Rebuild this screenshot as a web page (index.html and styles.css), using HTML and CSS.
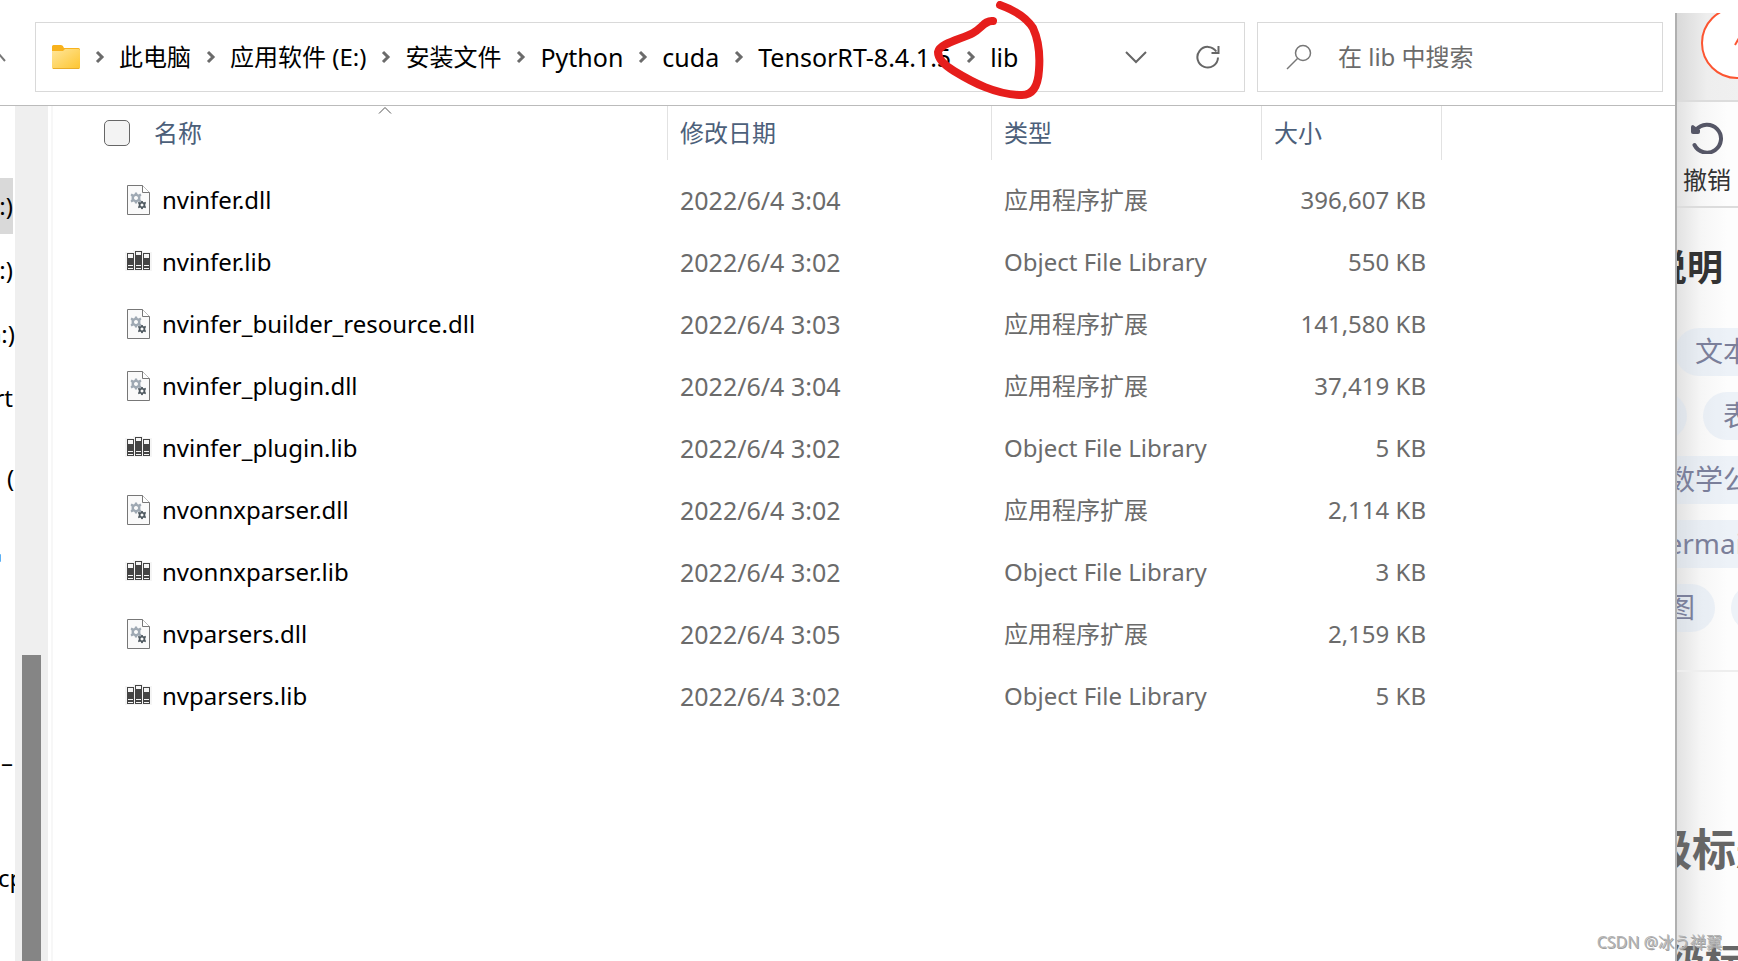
FILE: index.html
```html
<!DOCTYPE html>
<html lang="zh-CN">
<head>
<meta charset="utf-8">
<title>lib</title>
<link rel="stylesheet" href="styles.css">
<script src="files.js" defer></script>
</head>
<body>
<svg class="defs" aria-hidden="true">
  <symbol id="chev" viewBox="0 0 10 14"><path d="M2 2l5 5-5 5" fill="none" stroke="#6b6b6b" stroke-width="3"/></symbol>
  <symbol id="gear" viewBox="-6 -6 12 12"><path fill-rule="evenodd" d="M-1-5.5h2l.4 1.6 1.2.5 1.8-1 1.1 1.6-1.1 1.4v2.8l1.1 1.4-1.1 1.6-1.8-1-1.2.5-.4 1.6h-2l-.4-1.6-1.2-.5-1.8 1-1.1-1.6 1.1-1.4v-2.8l-1.1-1.4 1.1-1.6 1.8 1 1.2-.5zM0-2a2 2 0 1 0 .01 0z"/></symbol>
  <symbol id="dll" viewBox="0 0 27 30"><path d="M2.500.500h15l7 7v22h-22z" fill="#fafafa" stroke="#777"/><path d="M17.500.500v7h7" fill="#fff" stroke="#777"/><use href="#gear" x="5" y="7" width="12" height="12" fill="#9fa9b3"/><use href="#gear" x="12.500" y="15.500" width="9" height="9" fill="#4f5960"/></symbol>
  <symbol id="lib" viewBox="0 0 27 30"><path d="M0 5h8V3h10v2h9v19H0z" fill="#f5f5f5"/><path d="M2 6h7v17H2zM10 4h7v19h-7zM18 6h7v17h-7z" fill="#444"/><path d="M3 7h5v4H3zM11 5h5v3h-5zM19 7h5v4h-5zM3 18h5v1H3zM3 21h5v1H3zM11 18h5v1h-5zM11 21h5v1h-5zM19 18h5v1h-5zM19 21h5v1h-5z" fill="#f5f5f5"/></symbol>
</svg>
<div class="desktop">
  <main class="window">
    <div class="topbar">
      <button class="up" aria-label="上移"><svg viewBox="0 0 14 10" width="14" height="10"><path d="M1 9l6-7 6 7" fill="none" stroke="#777" stroke-width="2"/></svg></button>
      <nav class="address" aria-label="路径">
        <svg class="folder" viewBox="0 0 28 24" width="28" height="24"><defs><linearGradient id="fg" x1="0" y1="0" x2="1" y2="1"><stop offset="0" stop-color="#ffe69b"/><stop offset="1" stop-color="#fdc52f"/></linearGradient></defs><path d="M0 1.500Q0 0 1.500 0H9q2 0 3 3h14.500Q28 3 28 4.500V12H0z" fill="#f8b21c"/><path d="M0 6h11l2-2h13.500Q28 4 28 5.500v17q0 1.500-1.500 1.500h-25Q0 24 0 22.500z" fill="url(#fg)"/><path d="M1 23.500h26" stroke="#e8ac2b"/></svg>
        <ol class="crumbs">
          <li><a href="#">此电脑</a></li>
          <li><a href="#">应用软件 (E:)</a></li>
          <li><a href="#">安装文件</a></li>
          <li class="latin"><a href="#">Python</a></li>
          <li class="latin"><a href="#">cuda</a></li>
          <li class="latin"><a href="#">TensorRT-8.4.1.5</a></li>
          <li class="latin"><a href="#">lib</a></li>
        </ol>
        <button aria-label="历史记录"><svg viewBox="0 0 24 24" width="24" height="24"><path d="M2 7l10 10L22 7" fill="none" stroke="#666" stroke-width="2"/></svg></button>
        <button aria-label="刷新"><svg viewBox="0 0 24 24" width="24" height="24"><path d="M22 12.500A10.300 10.300 0 1 1 20.300 6.500M22.500 1v7h-7" fill="none" stroke="#666" stroke-width="2"/></svg></button>
        <svg class="scribble" viewBox="0 0 112 104" width="112" height="104" aria-hidden="true"><path d="M66 4C80 9 92 16 99 27C105 40 106 56 105 69C104 86 98 94 88 94C62 94 38 81 20 70C10 64 4 57 4 51C6 42 28 38 39 32C48 27 51 19 59 20" fill="none" stroke="#e61e1c" stroke-width="8" stroke-linecap="round" stroke-linejoin="round"/></svg>
      </nav>
      <label class="search">
        <svg viewBox="0 0 26 26" width="26" height="26"><circle cx="17" cy="9" r="7.500" fill="none" stroke="#777" stroke-width="1.500"/><path d="M11.500 14.500L1 25" stroke="#777" stroke-width="1.500"/></svg>
        <input type="text" placeholder="在 lib 中搜索" aria-label="在 lib 中搜索">
      </label>
    </div>
    <div class="body">
      <aside class="tree">
        <span class="node selected">:)</span>
        <span class="node">:)</span>
        <span class="node cut">G:)</span>
        <span class="node">rt</span>
        <span class="node paren">(</span>
        <span class="node dot"></span>
        <span class="node dash">–</span>
        <span class="node cut-cp">cp</span>
      </aside>
      <div class="scrollbar"><div class="thumb"></div></div>
      <section class="files">
        <table>
          <colgroup><col><col class="c-date"><col class="c-type"><col class="c-size"><col class="c-rest"></colgroup>
          <thead><tr>
            <th><svg class="sort" viewBox="0 0 14 8" width="14" height="8"><path d="M1 7.500l6-6 6 6" fill="none" stroke="#555"/></svg><label class="all"><input type="checkbox" aria-label="全选">名称</label></th>
            <th>修改日期</th><th>类型</th><th>大小</th><th></th>
          </tr></thead>
          <tbody id="rows"></tbody>
        </table>
      </section>
    </div>
  </main>
  <aside class="editor">
    <div class="publish"><span class="round"><svg viewBox="0 0 72 72" width="72" height="72"><circle cx="36" cy="36" r="35" fill="#fff" stroke="#fc5531" stroke-width="2"/><path d="M34 38l4-7" stroke="#fc5531" stroke-width="2"/></svg></span></div>
    <button class="undo"><svg viewBox="0 0 32 32" width="32" height="32"><path d="M5 8A14 14 0 1 1 3.500 23" fill="none" stroke="#555666" stroke-width="4" stroke-linecap="round"/><path d="M0 5q0-2 2-2l7 5v2q0 2-2 2H2q-2 0-2-2z" fill="#555666"/></svg>撤销</button>
    <div class="help">
      <h2>说明</h2>
      <div class="pills p1"><span>文本样式</span></div>
      <div class="pills p2"><span>列表</span><span>表格</span></div>
      <div class="pills p3"><span>数学公式</span></div>
      <div class="pills p4"><span>Mermaid</span></div>
      <div class="pills p5"><span>图</span><span>图</span></div>
    </div>
    <div class="levels"><strong class="h1">级标题</strong><strong class="h2">级标题</strong></div>
  </aside>
  <div class="watermark">CSDN @冰う禅翼</div>
</div>
</body>
</html>
```
FILE: files.js
```js
const files = [
  ["nvinfer.dll", "2022/6/4 3:04", "396,607 KB"],
  ["nvinfer.lib", "2022/6/4 3:02", "550 KB"],
  ["nvinfer_builder_resource.dll", "2022/6/4 3:03", "141,580 KB"],
  ["nvinfer_plugin.dll", "2022/6/4 3:04", "37,419 KB"],
  ["nvinfer_plugin.lib", "2022/6/4 3:02", "5 KB"],
  ["nvonnxparser.dll", "2022/6/4 3:02", "2,114 KB"],
  ["nvonnxparser.lib", "2022/6/4 3:02", "3 KB"],
  ["nvparsers.dll", "2022/6/4 3:05", "2,159 KB"],
  ["nvparsers.lib", "2022/6/4 3:02", "5 KB"]
];
document.getElementById("rows").innerHTML = files.map(([name, date, size]) => {
  const kind = name.slice(-3);
  const type = kind === "dll" ? "应用程序扩展" : "Object File Library";
  return `<tr><td><span class="name"><svg width="27" height="30"><use href="#${kind}"/></svg>${name}</span></td>` +
    `<td class="latin">${date}</td><td>${type}</td><td class="size">${size}</td><td></td></tr>`;
}).join("");
document.querySelectorAll(".crumbs li").forEach(li => {
  li.insertAdjacentHTML("afterbegin", '<svg width="10" height="14"><use href="#chev"/></svg>');
});
```
FILE: styles.css
```css
* { box-sizing: border-box; }
body { margin: 0; background: #fff; color: #000; font: 24px/32px "Noto Sans", "Noto Sans CJK SC", sans-serif; }
button { border: 0; background: none; padding: 0; font: inherit; color: inherit; }
.defs { position: absolute; width: 0; height: 0; }
.desktop { position: relative; display: flex; height: 100vh; overflow: hidden; }
.window { flex: 1; min-width: 0; display: flex; flex-direction: column; }
.topbar { display: flex; height: 106px; padding: 22px 12px 13px 0; border-bottom: 1px solid #bbb; }
.up { width: 35px; display: flex; align-items: center; overflow: hidden; }
.up svg { flex: none; margin-left: -8px; }
.address { position: relative; flex: 1; display: flex; align-items: center; border: 1px solid #d9d9d9; padding: 0 24px 0 16px; }
.crumbs { flex: 1; display: flex; margin: 0; padding: 0; list-style: none; white-space: nowrap; }
.crumbs li { display: flex; align-items: center; }
.crumbs svg { margin: 0 14px 0 15px; }
.crumbs a { color: #000; text-decoration: none; }
.address button { width: 24px; height: 24px; margin-left: 48px; }
.address button svg { display: block; }
.scribble { position: absolute; left: 898px; top: -22px; }
.search { flex: 0 0 406px; min-width: 0; display: flex; align-items: center; gap: 26px; margin-left: 12px; padding: 0 28px; border: 1px solid #d9d9d9; }
.search svg { flex: none; }
.search input { width: 0; min-width: 0; flex: 1; border: 0; outline: 0; padding: 0; font: inherit; background: none; }
.search input::placeholder { color: #6b6b6b; opacity: 1; }
.body { flex: 1; display: flex; min-height: 0; }
.tree { width: 15px; padding: 72px 2px 0 0; display: flex; flex-direction: column; overflow: hidden; }
.node { flex: none; display: flex; justify-content: flex-end; align-items: center; height: 56px; margin-bottom: 8px; }
.selected { background: #d9d9d9; }
.cut { margin-right: -2px; }
.paren { margin-top: 16px; justify-content: flex-start; padding-left: 7px; }
.dot { margin-top: 16px; }
.dot::before { content: ""; width: 2px; height: 8px; margin-right: 12px; border-radius: 0 4px 4px 0; background: #5ab0f5; }
.dash { margin-top: 140px; }
.cut-cp { margin-top: 52px; margin-left: -2px; justify-content: flex-start; }
.scrollbar { width: 33px; padding: 549px 7px 0; background: #efefef; }
.thumb { height: 100%; background: #858585; }
.files { flex: 1; margin-left: 3px; border-left: 2px solid #f7f7f7; }
table { width: 100%; table-layout: fixed; border-collapse: separate; border-spacing: 0; }
tbody::before { content: ""; display: table-row; height: 9px; }
.c-date { width: 324px; }
.c-type { width: 270px; }
.c-size { width: 180px; }
.c-rest { width: 233px; }
th { position: relative; height: 54px; padding: 0 12px; border-right: 1px solid #e2e2e2; color: #4c607a; font-weight: 400; text-align: left; }
th:first-child { padding-left: 51px; }
th:last-child { border: 0; }
.sort { position: absolute; left: 50%; top: 0; margin-left: 18px; }
.all { display: flex; align-items: center; gap: 24px; }
.all input { appearance: none; width: 26px; height: 26px; margin: 0; border: 1px solid #666; border-radius: 5px; background: #f3f3f3; }
td { height: 62px; padding: 0 12px; color: #6b6b6b; white-space: nowrap; }
.name { display: flex; align-items: center; gap: 10px; padding-left: 60px; color: #000; }
.latin { font-size: 25px; }
.size { text-align: right; padding-right: 16px; }
.editor { width: 63px; display: flex; flex-direction: column; margin-top: 13px; border-left: 2px solid #b0b0b0; overflow: hidden; background: linear-gradient(90deg, #e2e2e2, #f6f6f6 24px, #fdfdfd 50px); white-space: nowrap; }
.publish { flex: none; height: 89px; padding-left: 24px; border-bottom: 2px solid #dcdcdc; background: linear-gradient(90deg, #d9d9d9, #eee 30px, #f0f0f0); overflow: hidden; }
.round { display: block; margin-top: -6px; }
.undo { flex: none; display: flex; flex-direction: column; align-items: flex-start; gap: 10px; height: 106px; padding: 20px 0 0 6px; border-bottom: 2px solid #dcdcdc; color: #333; }
.undo svg { margin-left: 8px; }
.help { flex: none; height: 464px; padding-top: 36px; border-bottom: 2px solid #eee; }
.help h2 { margin: 0 0 36px -26px; font-size: 36px; line-height: 48px; color: #333; }
.pills { display: flex; gap: 16px; margin-bottom: 16px; font-size: 28px; line-height: 46px; color: #7b7f9a; }
.pills span { flex: none; height: 48px; padding: 0 20px; border-radius: 24px; background: #cfdded59; }
.p1 { margin-left: -2px; }
.p2 { margin-left: -86px; }
.p3 { margin-left: -30px; }
.p4 { margin-left: -56px; }
.p5 { margin-left: -30px; }
.levels { display: flex; flex-direction: column; color: #666; }
.levels strong { flex: none; }
.h1 { margin: 145px 0 0 -29px; font-size: 44px; line-height: 64px; }
.h2 { margin: 52px 0 0 -10px; font-size: 38px; line-height: 56px; }
.watermark { position: absolute; right: 16px; bottom: 7px; font-size: 16px; line-height: 24px; color: #b4b4b4; text-shadow: 1px 1px 0 #a0a0a0; }
```
